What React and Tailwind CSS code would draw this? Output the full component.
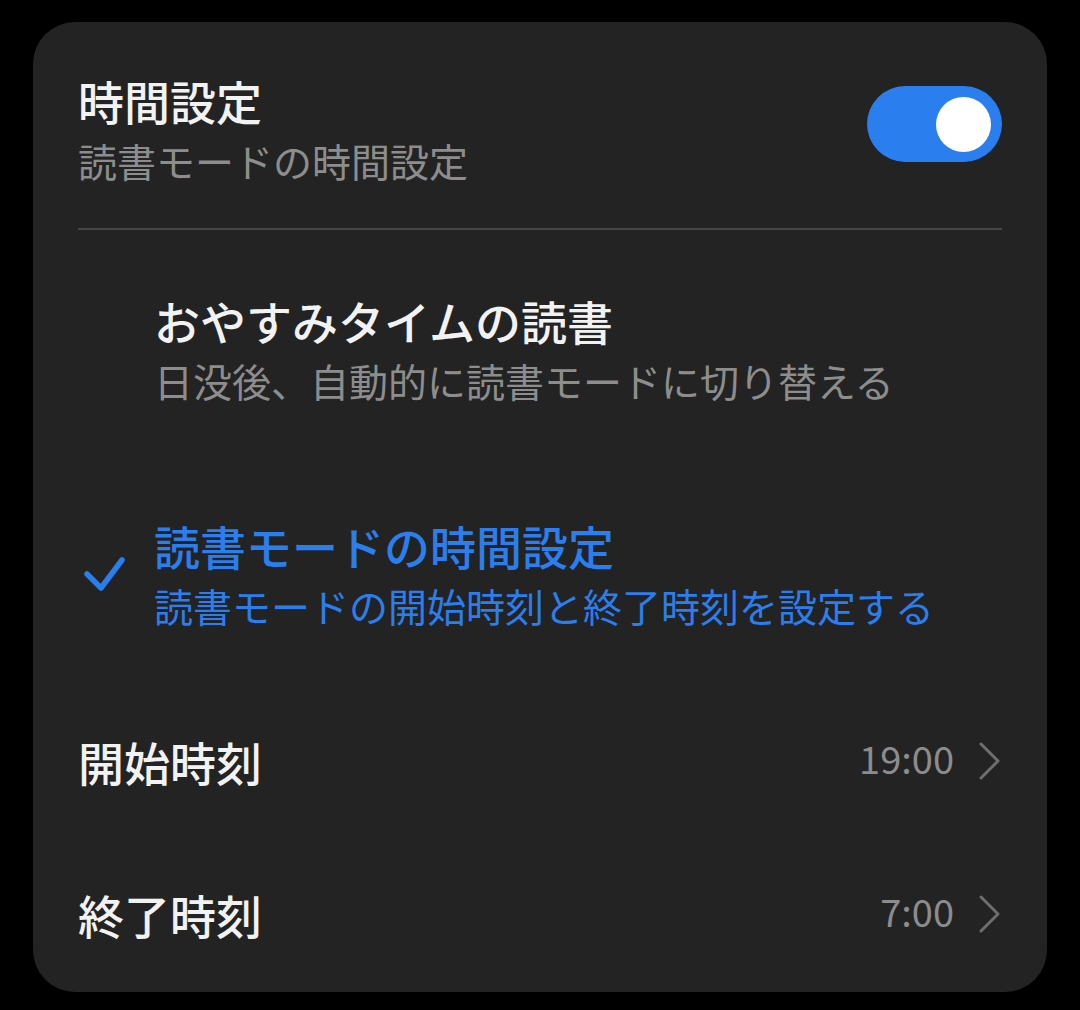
import React from "react";

const font = { fontFamily: '"Noto Sans CJK JP", "Noto Sans", sans-serif' };

function Chevron() {
  return (
    <svg width="24" height="40" viewBox="0 0 24 40" fill="none" aria-hidden="true">
      <path d="M3 3 L20 20 L3 37" stroke="#6e6e6e" strokeWidth="3" strokeLinecap="round" strokeLinejoin="round" />
    </svg>
  );
}

function Check() {
  return (
    <svg width="44" height="40" viewBox="0 0 44 40" fill="none" aria-hidden="true">
      <path d="M5 19 L19 33 L40 5" stroke="#2b7eed" strokeWidth="5.5" strokeLinecap="round" strokeLinejoin="round" />
    </svg>
  );
}

function TimeRow({ label, value, className }) {
  return (
    <div className={"flex items-center justify-between " + className}>
      <p className="text-[46px] leading-[60px] font-medium text-[#f2f2f2]">{label}</p>
      <div className="flex items-center gap-[24px]">
        <span className="text-[38px] leading-[60px] text-[#8c8c8c] -translate-y-[3px]">{value}</span>
        <Chevron />
      </div>
    </div>
  );
}

export default function App() {
  return (
    <div className="min-h-[1010px] w-[1080px] bg-black pt-[22px] pl-[33px]" style={font}>
      <div className="w-[1014px] h-[970px] rounded-[42px] bg-[#232323] pt-[48px] px-[45px]">
        {/* header */}
        <div className="flex justify-between">
          <div>
            <p className="text-[46px] leading-[60px] font-medium text-[#f2f2f2]">時間設定</p>
            <p className="text-[39px] leading-[60px] text-[#8d8d8d]">読書モードの時間設定</p>
          </div>
          <div className="mt-[16px] w-[135px] h-[76px] rounded-full bg-[#2b7eed] flex items-center justify-end pr-[11px]">
            <span className="w-[55px] h-[55px] rounded-full bg-white" />
          </div>
        </div>

        <div className="mt-[38px] h-[2px] bg-[#464646]" />

        {/* options */}
        <div className="mt-[60px] pl-[76px]">
          <p className="text-[46px] leading-[60px] font-medium text-[#f2f2f2]">おやすみタイムの読書</p>
          <p className="text-[39px] leading-[60px] text-[#8d8d8d]">日没後、自動的に読書モードに切り替える</p>
        </div>

        <div className="mt-[105px] flex items-center">
          <div className="w-[76px] flex items-center pl-[4px]">
            <Check />
          </div>
          <div>
            <p className="text-[46px] leading-[60px] font-medium text-[#2b7eed]">読書モードの時間設定</p>
            <p className="text-[39px] leading-[60px] text-[#2b7eed]">読書モードの開始時刻と終了時刻を設定する</p>
          </div>
        </div>

        <TimeRow label="開始時刻" value="19:00" className="mt-[96px]" />
        <TimeRow label="終了時刻" value="7:00" className="mt-[93px]" />
      </div>
    </div>
  );
}
